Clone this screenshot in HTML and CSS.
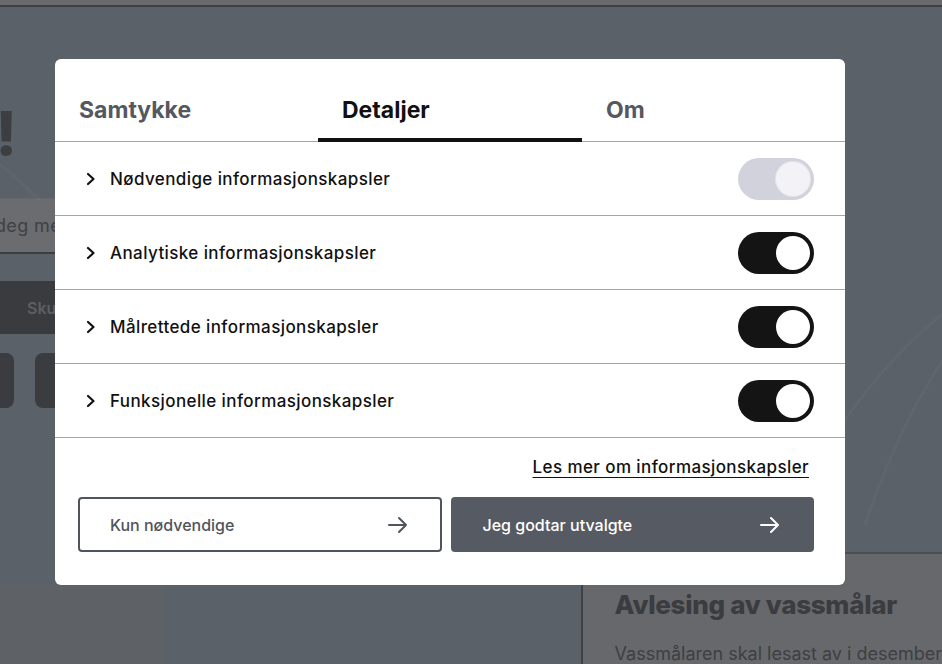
FILE: index.html
```html
<!DOCTYPE html>
<html lang="nn">
<head>
    <meta charset="UTF-8">
    <meta name="viewport" content="width=device-width, initial-scale=1.0">
    <title>Informasjonskapslar</title>
    <link rel="stylesheet" href="styles.css">
</head>
<body>
    <div class="page">
        <div class="topbar"></div>

        <svg class="page-lines" width="942" height="664" viewBox="0 0 942 664" aria-hidden="true">
            <path d="M960 300 C 920 330, 880 370, 845 420" />
            <path d="M960 335 C 920 390, 890 450, 865 525" />
            <path d="M0 165 C 15 175, 28 190, 40 200" />
        </svg>

        <div class="side">
            <div class="hero-title"><span>Velkommen heim!</span></div>
            <div class="search">Søk deg med adresse</div>
            <div class="search-button">Skulle du flytte?</div>
            <div class="tiles">
                <div class="tile"></div>
                <div class="tile"></div>
            </div>
        </div>

        <div class="bottom">
            <div class="bottom-left"></div>
            <div class="meter-card">
                <h2>Avlesing av vassmålar</h2>
                <p>Vassmålaren skal lesast av i desember</p>
            </div>
        </div>
    </div>

    <div class="consent">
        <div class="tabs">
            <div class="tab">Samtykke</div>
            <div class="tab active">Detaljer</div>
            <div class="tab">Om</div>
        </div>

        <div class="cookie-row">
            <svg class="chevron" width="12" height="14" viewBox="0 0 12 14"><path d="M3 2 L8.5 7 L3 12" /></svg>
            <span class="cookie-name">Nødvendige informasjonskapsler</span>
            <span class="toggle disabled"><span class="knob"></span></span>
        </div>
        <div class="cookie-row">
            <svg class="chevron" width="12" height="14" viewBox="0 0 12 14"><path d="M3 2 L8.5 7 L3 12" /></svg>
            <span class="cookie-name">Analytiske informasjonskapsler</span>
            <span class="toggle"><span class="knob"></span></span>
        </div>
        <div class="cookie-row">
            <svg class="chevron" width="12" height="14" viewBox="0 0 12 14"><path d="M3 2 L8.5 7 L3 12" /></svg>
            <span class="cookie-name">Målrettede informasjonskapsler</span>
            <span class="toggle"><span class="knob"></span></span>
        </div>
        <div class="cookie-row">
            <svg class="chevron" width="12" height="14" viewBox="0 0 12 14"><path d="M3 2 L8.5 7 L3 12" /></svg>
            <span class="cookie-name">Funksjonelle informasjonskapsler</span>
            <span class="toggle"><span class="knob"></span></span>
        </div>

        <div class="consent-footer">
            <div class="read-more"><a href="#">Les mer om informasjonskapsler</a></div>
            <div class="actions">
                <button class="action outline">
                    <span>Kun nødvendige</span>
                    <svg width="20" height="18" viewBox="0 0 20 18"><path d="M1 9 H18 M11 2 L18 9 L11 16" /></svg>
                </button>
                <button class="action filled">
                    <span>Jeg godtar utvalgte</span>
                    <svg width="20" height="18" viewBox="0 0 20 18"><path d="M1 9 H18 M11 2 L18 9 L11 16" /></svg>
                </button>
            </div>
        </div>
    </div>
</body>
</html>
```

FILE: styles.css
```css
* {
    margin: 0;
    padding: 0;
    box-sizing: border-box;
}

body {
    font-family: 'Inter', 'Roboto', sans-serif;
    background: #5a6169;
    width: 942px;
    height: 664px;
    overflow: hidden;
    position: relative;
}

/* dimmed page behind the dialog */

.page {
    position: relative;
    height: 664px;
    overflow: hidden;
}

.topbar {
    height: 7px;
    background: #6a6a6e;
    border-bottom: 2px solid #3d4045;
}

.page-lines {
    position: absolute;
    top: 0;
    left: 0;
    pointer-events: none;
}

.page-lines path {
    fill: none;
    stroke: rgba(255, 255, 255, 0.03);
    stroke-width: 3;
}

.side {
    display: flex;
    flex-direction: column;
}

.hero-title {
    display: flex;
    justify-content: flex-end;
    width: 17px;
    margin-top: 90px;
    font-size: 60px;
    line-height: 72px;
    font-weight: 800;
    color: #3c3e42;
    white-space: nowrap;
}

.search {
    width: 400px;
    height: 56px;
    margin-top: 29px;
    margin-left: -44px;
    background: #6b6c6f;
    border-top: 1px solid #64666a;
    border-bottom: 2px solid #3b3d41;
    display: flex;
    align-items: center;
    font-size: 18px;
    letter-spacing: 0.4px;
    color: #3f4145;
    white-space: nowrap;
}

.search-button {
    width: 400px;
    height: 53px;
    margin-top: 27px;
    margin-left: -8px;
    padding-left: 35px;
    background: #393b3f;
    display: flex;
    align-items: center;
    font-size: 16px;
    font-weight: 600;
    color: #5c5f64;
    white-space: nowrap;
}

.tiles {
    display: flex;
    gap: 21px;
    margin-top: 19px;
    margin-left: -100px;
}

.tile {
    width: 114px;
    height: 55px;
    border-radius: 8px;
    background: #3a3c40;
}

.tile + .tile {
    width: 100px;
}

.bottom {
    display: flex;
    margin-top: 144px;
}

.bottom-left {
    width: 165px;
    height: 120px;
    margin-top: 33px;
    background: #5e6266;
}

.meter-card {
    margin-left: 417px;
    flex: 1;
    height: 140px;
    background: #67686b;
    border-left: 2px solid #3e4145;
    border-top: 2px solid #4b4e53;
    padding: 35px 0 0 32px;
    white-space: nowrap;
}

.meter-card h2 {
    font-size: 26px;
    font-weight: 800;
    color: #3a3c3f;
    line-height: 32px;
    letter-spacing: -0.3px;
}

.meter-card p {
    margin-top: 22px;
    font-size: 18px;
    line-height: 22px;
    color: #3d3f43;
}

/* consent dialog */

.consent {
    position: absolute;
    top: 59px;
    left: 55px;
    width: 790px;
    background: #fff;
    border-radius: 6px;
    overflow: hidden;
}

.tabs {
    display: grid;
    grid-template-columns: 263px 264px 263px;
    border-bottom: 1px solid #a6a6a8;
}

.tab {
    height: 83px;
    margin-bottom: -1px;
    padding: 18px 24px 0;
    display: flex;
    align-items: center;
    font-size: 23px;
    font-weight: 700;
    color: #55585e;
    letter-spacing: 0;
}

.tab.active {
    color: #111;
    border-bottom: 4px solid #111;
    padding-top: 22px;
}

.cookie-row {
    height: 74px;
    display: flex;
    align-items: center;
    padding: 0 31px 0 30px;
    border-bottom: 1px solid #a6a6a8;
}

.chevron {
    flex-shrink: 0;
}

.chevron path {
    fill: none;
    stroke: #111;
    stroke-width: 2.2;
    stroke-linecap: round;
    stroke-linejoin: round;
}

.cookie-name {
    flex: 1;
    margin-left: 13px;
    font-size: 17px;
    font-weight: 500;
    letter-spacing: 0.4px;
    color: #111;
}

.toggle {
    width: 76px;
    height: 42px;
    border-radius: 21px;
    background: #141414;
    display: flex;
    align-items: center;
    justify-content: flex-end;
    padding-right: 4px;
}

.knob {
    width: 34px;
    height: 34px;
    border-radius: 50%;
    background: #fff;
}

.toggle.disabled {
    background: #d2d2dc;
}

.toggle.disabled .knob {
    background: #f2f2f7;
    box-shadow: 0 0 0 1px #e4e4ea;
}

.consent-footer {
    padding: 17px 31px 33px 23px;
}

.read-more {
    display: flex;
    justify-content: flex-end;
    padding-right: 5px;
    margin-bottom: 18px;
}

.read-more a {
    font-size: 17px;
    font-weight: 500;
    line-height: 24px;
    letter-spacing: 0.4px;
    color: #111;
    text-decoration: underline;
    text-decoration-thickness: 1px;
    text-underline-offset: 4px;
}

.actions {
    display: grid;
    grid-template-columns: 1fr 1fr;
    gap: 9px;
}

.action {
    height: 55px;
    border-radius: 4px;
    display: flex;
    align-items: center;
    justify-content: space-between;
    padding: 0 34px 0 32px;
    font-family: inherit;
    font-size: 16px;
    font-weight: 500;
    cursor: pointer;
}

.action svg path {
    fill: none;
    stroke-width: 2;
    stroke-linecap: round;
    stroke-linejoin: round;
}

.action.outline {
    background: #fff;
    border: 2px solid #50545b;
    color: #50545b;
    padding-left: 30px;
    padding-right: 32px;
}

.action.outline svg path {
    stroke: #50545b;
}

.action.filled {
    background: #565a63;
    border: none;
    color: #fff;
}

.action.filled svg path {
    stroke: #fff;
}
```
